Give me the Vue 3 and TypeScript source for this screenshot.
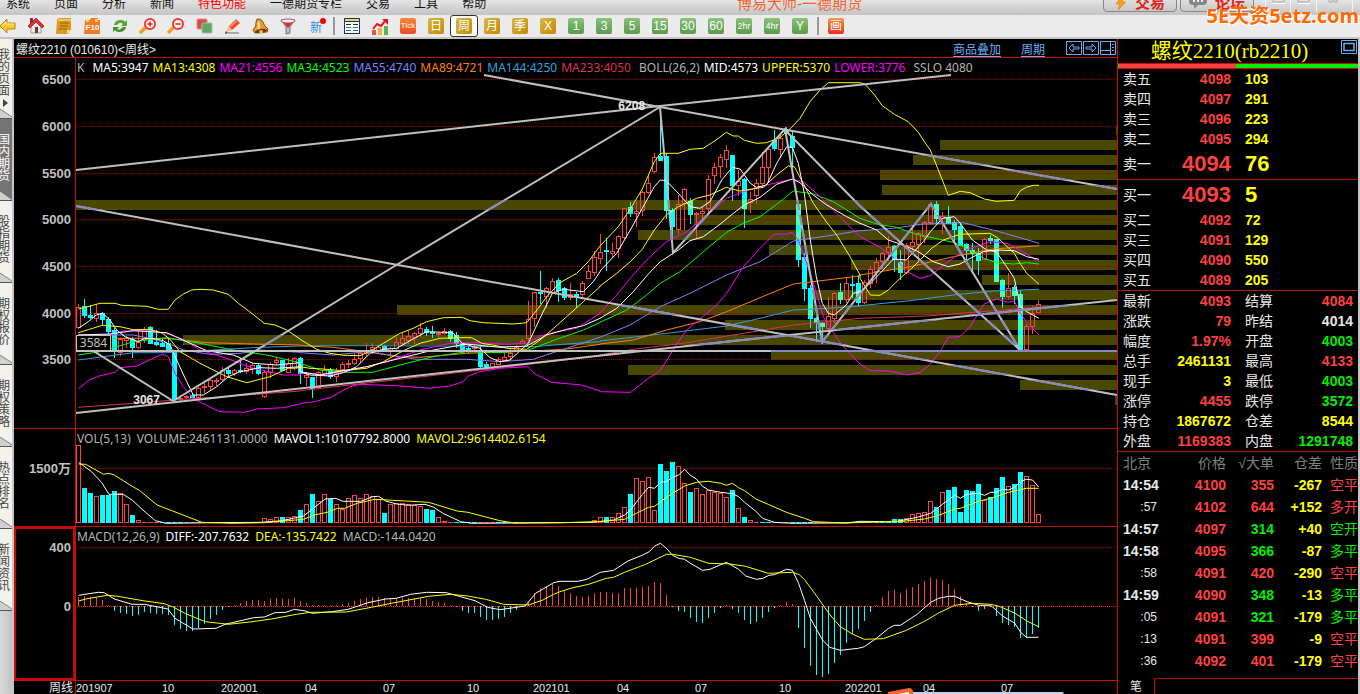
<script setup lang="ts">
type Kind = 'r' | 'c'
interface Candle { x: number; kind: Kind; high: number; top: number; bottom: number; low: number }
interface Bar { x: number; kind: Kind; y: number; h: number }
/* origin x, origin y, units per pixel in x, units per pixel in y, then the points */
type Segment = [number, number, number, number, string]

const step = 6
const firstX = 76

const menu = [
  { text: '系统' }, { text: '页面' }, { text: '分析' }, { text: '新闻' }, { text: '特色功能', hot: true },
  { text: '一德期货专栏' }, { text: '交易' }, { text: '工具' }, { text: '帮助' },
]
const tools = [
  { icon: 'back', label: '后退' }, { icon: 'home', label: '主页' }, { icon: 'note', label: '笔记' }, { icon: 'f10', label: 'F10' },
  { icon: 'refresh', label: '刷新' }, { icon: 'zoomin', label: '放大' }, { icon: 'zoomout', label: '缩小' }, { icon: 'layers', label: '叠加' },
  { icon: 'pencil', label: '画线' }, { icon: 'bell', label: '预警' }, { icon: 'funnel', label: '筛选' }, { icon: 'new', label: '新' },
]
const views = [{ icon: 'list', label: '报价' }, { icon: 'trend', label: '走势' }]
const periods = [
  { text: 'Tick', tone: 'tick' }, { text: '日', tone: 'gold' }, { text: '周', tone: 'gold', on: true }, { text: '月', tone: 'gold' },
  { text: '季', tone: 'gold' }, { text: 'X', tone: 'gold' }, { text: '1', tone: 'green' }, { text: '3', tone: 'green' },
  { text: '5', tone: 'green' }, { text: '15', tone: 'green' }, { text: '30', tone: 'green' }, { text: '60', tone: 'green' },
  { text: '2hr', tone: 'green small' }, { text: '4hr', tone: 'green small' }, { text: 'Y', tone: 'green' },
]
const sideTabs = ['我的页面', '国内期货', '股指期货', '期权报价', '期权策略', '热点排名', '新闻资讯']

const candleText = `
r304,307,327,327 c299,306,315,317 c305,315,317,318 r305,313,318,321 c312,313,319,324 c317,319,331,333 c328,330,351,357 r338,339,352,355
r336,338,340,347 c337,339,347,357 r330,342,347,348 r327,329,339,342 c326,327,343,343 c330,342,344,345 c338,343,346,346 c338,343,351,351
c350,351,399,401 r396,398,399,401 r395,396,397,398 c393,395,397,398 r387,388,397,399 r383,386,387,392 r378,380,386,389 r378,380,381,385
r367,370,379,380 c368,370,373,377 r369,370,373,375 c358,370,371,372 r363,368,371,373 r363,365,368,373 c363,365,373,374 r370,372,396,397
r362,364,372,377 r357,360,362,364 c360,360,370,370 r358,363,372,372 r357,358,368,369 c357,358,373,383 r372,375,377,385 c377,377,388,397
r371,372,387,388 r365,370,373,375 c368,370,376,378 r368,372,376,381 r362,364,369,372 r360,363,364,367 r353,359,363,364 r350,353,358,362
r343,351,353,355 r343,347,349,353 r345,347,350,353 c345,346,349,351 r347,348,350,356 r337,342,348,350 r333,338,343,345 r331,336,340,343
r332,333,337,343 r323,328,333,336 c327,329,332,335 c326,332,333,337 r332,333,334,336 r328,331,333,334 c330,331,338,341 c332,335,343,347
c343,343,351,352 c347,348,350,352 r345,347,348,350 c345,352,366,367 c362,364,368,368 r363,363,367,368 r357,359,364,364 r353,357,360,360
r349,353,356,359 r345,347,350,350 r339,341,343,343 r301,319,338,340 r292,292,318,326 c271,292,293,303 r287,288,296,307 r278,281,292,293
c278,280,290,301 c287,288,297,299 r283,294,297,299 c292,294,296,307 r281,283,294,297 r265,271,278,278 r251,257,272,275 r234,252,258,263
c238,250,251,270 r243,251,253,257 r235,236,248,257 r208,208,237,238 c202,207,213,216 r202,211,213,226 r191,192,210,215 r175,183,192,193
r153,157,171,172 c107,156,160,160 c153,156,210,218 c208,210,226,253 r195,204,229,233 r188,189,203,229 c198,201,214,223 r212,213,214,237
r207,211,213,220 r175,179,208,213 r163,167,175,183 r154,157,166,177 r145,150,159,167 c155,155,185,200 r170,181,185,195 c178,179,208,227
r192,199,202,212 r179,183,195,203 r152,167,183,187 r148,149,167,182 c130,140,148,150 r135,138,149,157 c127,131,133,133 c130,136,147,167
c203,204,259,266 c253,257,288,300 c285,288,318,327 c317,318,322,341 c322,323,326,343 r297,316,328,331 r292,293,318,322 c283,292,299,303
r278,283,299,302 c275,284,285,297 c275,283,302,305 r280,282,302,303 r266,269,283,287 r258,262,271,282 r252,253,261,268 r236,247,252,260
c245,246,259,271 c250,262,272,279 r243,245,272,273 r226,242,246,250 r232,233,244,262 r221,222,236,242 r203,204,222,224 c201,204,218,223
r212,216,218,233 c206,217,223,223 c220,222,229,241 c223,226,245,245 c243,244,250,260 c243,250,253,271 c248,253,260,274 r238,239,259,259
c235,238,240,243 c239,239,281,281 c279,280,296,307 r273,288,296,298 c285,287,295,303 c290,294,350,350 r324,326,349,349 r306,313,326,333
r300,304,312,312`

const candles: Candle[] = candleText.trim().split(/\s+/).map((item, i) => {
  const [high, top, bottom, low] = item.slice(1).split(',').map(Number)
  return { x: firstX + i * step, kind: item[0] as Kind, high, top, bottom, low }
})

/* volume: index of the first bar of a run, then the tops of the bars */
const volumeRuns: [number, string][] = [
  [0, 'r445 c488 c493 r496 c495 c495 c491 r493 r504 c515 r520 r522'],
  [31, 'r518 r519 r517 c517 r517 r516 c510 r504 c494 r501 r494 c499 r504 r509 r498 r495 r498 r494 r496 r499 c513 r504 r503 r503 r504 r505 r506 c509 c510 r517 r521'],
  [86, 'r520 r517 c517 r517 r513 r507 c494 r478 r481 r477 r510 c464 c471 c462 r466 r483 c492 r488 r494 r490 r492 r493 r497 c490 r508 c517 r520 r522'],
  [136, 'c519 c519 r518 r514 r513 r512 r501 c507 r492 c490 c487 c512 c490 c491 c484 r500 c497 c488 c477 r486 c484 c472 r476 r485 r514'],
]
const volumes: Bar[] = Array.from({ length: 161 }, (_, i) => ({
  x: firstX + i * step, kind: (i % 7 < 4 ? 'c' : 'r') as Kind, y: 522, h: 1,
}))
for (const [start, run] of volumeRuns) {
  run.split(' ').forEach((item, k) => {
    const y = Number(item.slice(1))
    volumes[start + k] = { x: firstX + (start + k) * step, kind: item[0] as Kind, y, h: 523 - y }
  })
}

const zero = 606
const histogram: Bar[] = `597 596 597 598 600 605 611 613 614 616 615 612 613 614 614 615 625 629 631 631 628 624 619 615 610 607 605 603 601 600 600 601
599 598 599 599 598 601 603 605 605 605 605 605 604 603 601 599 598 597 597 598 599 598 598 598 598 598 599 601 602 603 605 606 611 613 613 617 620 620
619 617 613 610 606 602 593 588 586 584 586 591 593 596 597 596 593 592 592 593 593 588 588 588 587 586 582 583 595 606 611 612 618 622 623 618 613 608
605 609 613 620 624 622 618 612 608 605 602 604 628 648 666 675 677 674 663 655 643 634 629 621 612 605 597 591 590 593 589 587 584 581 577 579 580 584
589 596 603 606 611 609 607 616 623 625 627 638 638 634 628`.split(/\s+/).map((item, i) => {
  const y = Number(item)
  return { x: 78 + i * step, kind: y < zero ? 'r' : 'c', y: Math.min(y, zero), h: Math.max(1, Math.abs(y - zero)) }
})

function linePoints(segments: Segment[]): string {
  return segments.map(([ox, oy, sx, sy, points]) => points.split(' ').map((p) => {
    const [x, y] = p.split(',').map(Number)
    return `${(ox + x / sx).toFixed(1)},${(oy + y / sy).toFixed(1)}`
  }).join(' ')).join(' ')
}
const priceLine = (a: string, b: string, c: string, d: string) =>
  linePoints([[0, 40, 3, 3, a], [300, 60, 3, 3, b], [600, 60, 3, 3, c], [860, 60, 3, 3, d]])
const lowerLine = (a: string, b: string) => linePoints([[0, 430, 2.8, 3, a], [560, 430, 2.8, 3, b]])

const priceLines = [
  { color: '#dc3250', points: priceLine('235,1102 400,1090 550,1078 700,1068 900,1053', '0,992 300,958 600,923 900,887', '0,885 100,868 250,850 400,825 580,795 780,775', '0,775 200,768 400,752 537,742') },
  { color: '#32a0dc', points: priceLine('235,960 400,938 500,938 640,930 780,922 900,918', '0,857 200,857 400,858 700,860 800,852 900,845', '0,843 200,820 380,798 480,775 580,750 680,745 780,738', '0,737 150,722 280,705 400,693 537,688') },
  { color: '#ff8000', points: priceLine('340,895 500,895 620,908 760,912 900,915', '0,857 100,862 200,875 300,890 360,892 500,880 700,873 800,867 900,853', '0,852 100,840 200,810 300,785 380,755 480,713 580,672 680,660 780,648', '0,645 150,620 280,590 400,567 537,557') },
  { color: '#8080ff', points: priceLine('235,885 400,885 450,895 510,912 550,930 630,943 720,940 780,930 900,937', '0,878 100,885 200,875 300,890 350,898 500,898 600,905 700,898 800,865 900,832', '0,832 90,795 181,740 270,700 380,645 480,605 580,543 680,528 780,512', '0,512 100,505 190,492 310,488 410,513 480,533 537,550') },
  { color: '#00ff00', points: priceLine('235,945 300,935 400,905 500,893 600,910 700,930 800,945 900,968', '0,910 60,930 130,937 220,937 300,915 400,890 500,875 600,878 680,872 770,838 850,810 900,788', '0,787 80,750 140,705 181,670 240,635 310,575 380,517 430,490 480,470 530,433 580,393 640,402 700,425 780,475', '0,475 60,495 103,500 170,523 280,547 310,560 373,595 409,608 460,612 500,608 537,612') },
  { color: '#ff00ff', points: priceLine('235,885 330,885 370,873 440,872 500,880 550,898 600,930 680,955 760,985 850,1005 900,1005', '0,938 90,945 180,925 260,905 360,870 450,850 530,848 620,853 680,850 720,828 770,815 830,805 900,760', '0,758 50,705 91,655 145,595 199,545 260,515 310,475 380,415 430,395 500,375 577,357 610,365 660,410 720,470 780,530', '0,530 60,562 103,595 150,640 180,655 211,647 260,608 310,573 390,545 440,550 480,570 537,605') },
  { color: '#ffff00', points: priceLine('235,878 265,869 307,856 360,860 400,869 450,868 487,880 510,898 540,935 600,970 680,1010 740,1028 810,1010 865,985 900,983', '0,920 30,925 70,927 125,932 200,925 250,905 310,872 360,850 420,835 480,833 515,833 545,850 590,857 620,865 680,868 720,840 755,810 800,770 850,725 900,680', '0,678 50,640 91,605 127,568 163,510 199,465 235,440 290,415 330,405 379,382 420,393 450,388 490,382 530,345 565,318 583,320 610,370 640,430 680,487 710,525 750,590 780,645', '0,655 31,705 60,706 85,690 120,655 155,625 180,600 215,565 250,540 300,523 390,520 415,535 463,580 480,610 500,640 537,673') },
  { color: '#ffffff', points: priceLine('235,885 330,882 400,872 500,878 560,905 620,932 700,945 760,970 830,975 900,968', '0,935 60,945 130,932 200,920 300,895 400,870 500,852 600,862 680,858 740,825 800,808 850,797 900,775', '0,775 50,745 100,695 145,642 181,605 235,570 270,542 310,530 360,493 400,460 433,435 480,412 530,373 577,357 600,368 640,405 680,435 740,470 780,490', '0,490 50,510 85,540 130,555 175,575 220,605 265,620 300,612 337,592 370,575 410,570 463,572 500,590 537,598') },
  { color: '#ffffff', points: priceLine('235,865 265,845 289,825 307,820 330,840 350,870 375,890 415,905 433,895 470,897 490,902 510,915 530,960 560,1025 580,1065 610,1065 650,1040 685,1010 720,995 780,983 830,985 900,980', '0,935 30,945 90,948 130,938 170,920 210,880 250,868 290,865 343,835 380,815 433,817 460,820 487,850 520,860 541,865 570,893 600,905 630,900 685,850 720,775 757,700 790,688 850,695 880,665 900,635', '0,633 50,580 91,510 127,445 163,380 181,360 199,362 235,400 271,440 300,445 330,425 365,360 397,322 420,327 451,370 469,382 500,375 530,310 560,260 577,262 595,310 613,400 631,540 649,650 667,730 685,760 703,765 739,735 760,700 780,695', '0,695 31,670 60,640 100,597 139,600 157,580 190,545 211,515 247,475 283,470 301,490 337,540 380,570 409,575 440,620 463,655 481,740 500,755 537,775') },
  { color: '#ffff00', points: priceLine('235,807 253,803 300,790 345,790 365,796 440,799 475,808 505,808 525,780 550,762 575,750 600,748 640,750 685,763 715,790 745,812 793,850 825,855 860,870 900,897', '0,838 50,868 90,880 130,886 180,887 217,870 250,850 300,820 340,805 380,785 430,773 487,772 510,782 550,788 640,792 680,788 715,745 740,710 780,668 830,640 865,605 900,558', '0,558 55,500 91,447 127,387 163,305 181,280 235,280 270,268 310,265 345,242 379,217 400,228 415,228 433,241 470,250 500,248 541,232 575,202 600,175 630,125 660,90 685,68 780,68', '0,68 15,73 40,100 67,137 103,163 145,185 175,217 195,248 211,270 229,315 247,360 265,406 301,394 330,398 373,417 409,424 463,421 481,392 499,382 520,376 537,376') },
  { color: '#ff00ff', points: priceLine('235,1047 265,1022 300,1007 345,997 360,983 410,978 455,957 487,942 505,950 525,1000 550,1040 580,1075 620,1097 660,1115 735,1117 770,1107 850,1103 900,1092', '0,1030 35,1027 90,1013 150,980 180,973 230,975 290,977 390,985 450,978 490,965 505,948 540,935 600,925 685,920 705,942 755,967 845,975 900,993', '0,995 92,997 145,955 181,932 225,860 260,810 290,785 350,735 380,700 430,620 480,565 523,523 560,522 577,517 595,540 620,610 650,700 670,770 721,850 780,912', '0,912 31,932 90,933 140,945 180,937 211,912 240,875 265,832 300,830 330,800 373,732 409,717 430,723 445,727 463,722 475,750 499,785 537,825') },
]

const drawings = [
  '76,170 660,106 951,75', '76,206 398,265 787,335 1117,395', '484,75 660,107 787,130 1117,189', '173,401 398,264 660,107',
  '76,340 173,401', '76,413 733,341 1117,300', '76,351 1117,351', '660,107 673,253 785,129 822,342 931,204 1020,350', '785,130 860,206 1020,350',
]

const profile = [
  [1116, 125], [940, 140], [913, 155], [880, 170], [882, 185], [76, 200], [694, 215], [638, 230], [769, 245], [851, 260],
  [982, 275], [812, 290], [397, 305], [725, 320], [183, 335], [771, 350], [628, 365], [1020, 380], [1115, 395],
]
const priceScale = [[6500, 79], [6000, 126], [5500, 173], [5000, 219], [4500, 266], [4000, 313], [3500, 359]]

const volumeLines = [
  { color: '#ffffff', points: lowerLine('220,97 255,124 285,158 305,193 345,193 370,210 400,240 435,272 465,280 600,278 730,277 790,272 850,258 875,237 910,207 940,205 960,214 1010,214 1043,200 1060,199 1080,213 1110,222 1145,226 1190,223 1215,232 1240,250 1290,275 1320,280 1568,278', '0,278 90,277 150,270 181,255 197,240 231,193 248,172 265,175 281,157 298,155 315,142 332,135 349,118 365,136 382,147 399,169 416,180 450,187 483,191 500,200 517,217 550,245 567,265 600,277 650,280 760,279 800,279 840,274 940,275 1000,262 1038,250 1071,223 1105,196 1121,205 1138,193 1172,190 1189,196 1206,187 1222,187 1239,178 1256,180 1273,172 1290,154 1306,148 1323,150 1340,171') },
  { color: '#ffff00', points: lowerLine('220,102 240,103 290,133 305,130 320,135 370,169 390,181 440,225 500,250 565,277 650,280 740,278 850,268 880,255 920,246 945,235 965,235 1000,220 1050,208 1100,211 1200,217 1280,243 1310,247 1400,272 1440,279 1568,278', '0,278 110,275 181,268 214,250 248,232 265,229 298,202 349,168 382,157 416,154 450,160 466,166 483,160 500,173 517,182 550,208 583,223 634,247 685,265 710,275 800,279 960,274 1021,267 1060,256 1105,237 1121,235 1172,214 1206,205 1256,187 1306,175 1340,175') },
]
const macdLines = [
  { color: '#ffffff', points: lowerLine('220,496 275,487 292,488 320,507 370,523 405,523 470,537 490,565 540,597 605,595 630,583 710,563 740,561 770,548 800,547 825,538 855,543 875,550 930,545 975,538 1030,518 1080,507 1110,505 1150,493 1195,487 1250,488 1290,500 1330,512 1365,532 1400,539 1470,528 1500,490 1550,458 1568,454', '0,454 50,454 75,448 113,427 150,421 190,393 230,376 250,365 265,348 281,340 300,357 315,376 332,385 349,388 365,400 399,421 420,418 466,397 500,418 520,438 550,448 568,445 585,436 600,434 634,418 651,421 668,460 685,512 701,565 735,630 755,652 785,661 835,655 852,650 886,625 920,595 936,586 953,586 1000,553 1038,517 1060,505 1088,499 1105,499 1140,515 1172,526 1206,526 1239,558 1273,579 1290,607 1306,622 1340,622') },
  { color: '#ffff00', points: lowerLine('220,513 240,507 300,496 330,499 400,512 460,521 485,531 520,551 575,575 640,583 700,576 760,567 830,553 870,547 970,546 1040,532 1100,519 1160,507 1200,499 1260,493 1310,498 1360,508 1410,523 1480,525 1520,510 1550,493 1568,485', '0,485 30,475 80,463 130,445 150,442 181,427 240,403 298,373 315,373 365,382 416,400 450,401 470,401 520,409 583,430 625,428 651,427 670,434 685,449 720,500 755,553 785,590 820,613 852,628 905,626 970,601 1021,574 1060,549 1105,526 1155,520 1206,523 1230,529 1273,549 1306,572 1340,590') },
]

const priceLegend = [
  { text: 'K', tone: 'gray', wide: true }, { text: 'MA5:3947', tone: 'white' }, { text: 'MA13:4308', tone: 'yellow' }, { text: 'MA21:4556', tone: 'magenta' },
  { text: 'MA34:4523', tone: 'lime' }, { text: 'MA55:4740', tone: 'violet' }, { text: 'MA89:4721', tone: 'orange' }, { text: 'MA144:4250', tone: 'sky' },
  { text: 'MA233:4050', tone: 'crimson', wide: true }, { text: 'BOLL(26,2)', tone: 'gray' }, { text: 'MID:4573', tone: 'white' }, { text: 'UPPER:5370', tone: 'yellow' },
  { text: 'LOWER:3776', tone: 'magenta', wide: true }, { text: 'SSLO 4080', tone: 'gray' },
]
const volumeLegend = [
  { text: 'VOL(5,13)', tone: 'gray' }, { text: 'VOLUME:2461131.0000', tone: 'gray' }, { text: 'MAVOL1:10107792.8000', tone: 'white' }, { text: 'MAVOL2:9614402.6154', tone: 'yellow' },
]
const macdLegend = [
  { text: 'MACD(12,26,9)', tone: 'gray' }, { text: 'DIFF:-207.7632', tone: 'white' }, { text: 'DEA:-135.7422', tone: 'yellow' }, { text: 'MACD:-144.0420', tone: 'gray' },
]
const months: [string, number][] = [
  ['201907', 86], ['10', 59], ['202001', 84], ['04', 78], ['07', 84], ['10', 66], ['202101', 84], ['04', 78], ['07', 84], ['10', 66], ['202201', 78], ['04', 78], ['07', 116],
]
const monthColumns = months.map(([, span]) => `minmax(0, ${span}fr)`).join(' ')

const asks = [['卖五', '4098', '103'], ['卖四', '4097', '291'], ['卖三', '4096', '223'], ['卖二', '4095', '294'], ['卖一', '4094', '76']]
const bids = [['买一', '4093', '5'], ['买二', '4092', '72'], ['买三', '4091', '129'], ['买四', '4090', '550'], ['买五', '4089', '205']]
const quotes = [
  ['最新', '4093', 'up', '结算', '4084', 'up'], ['涨跌', '79', 'up', '昨结', '4014', 'flat'], ['幅度', '1.97%', 'up', '开盘', '4003', 'down'],
  ['总手', '2461131', 'qty', '最高', '4133', 'up'], ['现手', '3', 'qty', '最低', '4003', 'down'], ['涨停', '4455', 'up', '跌停', '3572', 'down'],
  ['持仓', '1867672', 'qty', '仓差', '8544', 'qty'], ['外盘', '1169383', 'up', '内盘', '1291748', 'down'],
]
const trades = [
  ['14:54', '4100', '355', '-267', '空平', 'up'], [':57', '4102', '644', '+152', '多开', 'up'], ['14:57', '4097', '314', '+40', '空开', 'down'],
  ['14:58', '4095', '366', '-87', '多平', 'down'], [':58', '4091', '420', '-290', '空平', 'up'], ['14:59', '4090', '348', '-13', '多平', 'down'],
  [':05', '4091', '321', '-179', '多平', 'down'], [':13', '4091', '399', '-9', '空平', 'up'], [':36', '4092', '401', '-179', '空平', 'up'],
]
</script>

<template>
  <div class="app">
    <header class="menubar">
      <nav class="menu">
        <a v-for="m in menu" :key="m.text" href="#" :class="{ hot: m.hot }">{{ m.text }}</a>
      </nav>
      <h1>博易大师-一德期货</h1>
      <div class="actions">
        <button class="action" type="button">
          <svg width="12" height="14" viewBox="0 0 12 14"><path d="M7 0 1 8h4l-2 6 8-8H7l3-6z" fill="#ffa21a" stroke="#d87a00" stroke-width=".6" /></svg>交易
        </button>
        <button class="action" type="button">
          <svg width="18" height="14" viewBox="0 0 18 14"><path d="M4 1h10q4 0 4 4t-4 4H9l-4 4V9H4Q0 9 0 5t4-4z" fill="#858585" /><path d="M4 4h2v2H4zM8 4h2v2H8zM12 4h2v2h-2z" fill="#eee" /></svg>论坛
        </button>
        <svg class="winctl" width="88" height="15" viewBox="0 0 88 15">
          <path d="M.5 0v12M25.5 0v12M51.5 0v12M87.5 0v12" stroke="#f4f4f4" />
          <path d="M8 0v2h11V0M33 0v2h11V0M64 0v2h3V0M69 0v2h3V0" fill="none" stroke="#aaa" />
          <path d="M8 3.500h12M33 3.500h12" stroke="#fff" />
        </svg>
      </div>
      <span class="brand">5E天资5etz.com</span>
    </header>

    <div class="toolbar">
      <button v-for="t in tools" :key="t.icon" class="tool" type="button" :aria-label="t.label">
        <svg v-if="t.icon === 'back'" width="18" height="16" viewBox="0 0 18 16"><path d="M1 8 8 1v4h8v6H8v4z" fill="#f7c832" stroke="#b98508" /><path d="M3 8l4-4v2h8" fill="none" stroke="#fff09a" /></svg>
        <svg v-else-if="t.icon === 'home'" width="18" height="18" viewBox="0 0 18 18"><path d="M4 8v8h10V8l-5-5z" fill="#e8e8f0" stroke="#999" /><path d="M1 9 9 1l8 8-2 2-6-6-6 6z" fill="#e03434" stroke="#a01010" stroke-width=".7" /><path d="M3 1h3v4L3 7z" fill="#b02020" /><path d="M8 10h3v6H8z" fill="#713b20" /></svg>
        <svg v-else-if="t.icon === 'note'" width="16" height="16" viewBox="0 0 16 16"><path d="M1 2q0-2 3-2h11v12l-3 4H0z" fill="#d99a22" /><path d="M2 1h13v2H2z" fill="#f2c65d" /><path d="M4 5h9M4 8h8M3 11h8" stroke="#9b6708" /><path d="M11 16v-4h4z" fill="#ffe39b" /></svg>
        <svg v-else-if="t.icon === 'f10'" width="17" height="16" viewBox="0 0 17 16"><path d="M1 2h5l1-2h7v2h2v14H0z" fill="#f07a24" /><path d="M2 1h3v3H2zM11 1h3v3h-3z" fill="#ffd276" /><text x="8.500" y="12" text-anchor="middle" class="f10">F10</text></svg>
        <svg v-else-if="t.icon === 'refresh'" width="16" height="16" viewBox="0 0 16 16"><path d="M2 7q1-5 7-5 3 0 4 2l2-2v6H9l2-2Q8 3 5 7z" fill="#58a72c" /><path d="M14 9q-1 5-7 5-3 0-4-2l-2 2V9h6l-2 2q3 2 6-2z" fill="#3e8e2a" /></svg>
        <svg v-else-if="t.icon === 'zoomin' || t.icon === 'zoomout'" width="18" height="18" viewBox="0 0 18 18"><path d="m1 16 6-6" stroke="#f0a020" stroke-width="3.500" /><circle cx="11" cy="7" r="5" fill="#fff4f0" stroke="#ee3a30" stroke-width="2" /><path d="M8.500 7h5" stroke="#d22" stroke-width="1.500" /><path v-if="t.icon === 'zoomin'" d="M11 4.500v5" stroke="#d22" stroke-width="1.500" /></svg>
        <svg v-else-if="t.icon === 'layers'" width="17" height="16" viewBox="0 0 17 16"><rect x="1" y="1" width="10" height="10" rx="1" fill="#d94c4c" stroke="#f08080" /><rect x="6" y="5" width="10" height="10" rx="1" fill="#5da665" stroke="#94ca96" /></svg>
        <svg v-else-if="t.icon === 'pencil'" width="17" height="17" viewBox="0 0 17 17"><path d="M4 15h11" stroke="#aaa" stroke-width="2" /><path d="m3 13 2-5 7-7 4 4-8 7z" fill="#ee4a2c" /><path d="m6 8 6-6 1 1-6 6z" fill="#ff9b7c" /><path d="m2 14 3-6 3 4z" fill="#f5c48d" /><path d="m1 16 1-3 2 2z" fill="#333" /></svg>
        <svg v-else-if="t.icon === 'bell'" width="17" height="17" viewBox="0 0 17 17"><path d="M5 1q4-1 6 3 1 4 5 7l-1 3-12 1-2-3q4-4 3-8z" fill="#e89b26" stroke="#86500a" /><path d="M6 4q2 4 0 7" fill="none" stroke="#ffe198" stroke-width="2" /><ellipse cx="9" cy="13" rx="6" ry="2" transform="rotate(-8 9 13)" fill="#6d3606" /><circle cx="9" cy="14" r="2" fill="#efbd4c" /></svg>
        <svg v-else-if="t.icon === 'funnel'" width="16" height="17" viewBox="0 0 16 17"><path d="M1 2h14l-5 7v6l-4 1V9z" fill="#b4bbc4" stroke="#6d7880" /><ellipse cx="8" cy="3" rx="7" ry="2" fill="#e9eef2" stroke="#c94848" /><path d="m4 5 8 0-4 5z" fill="#e32626" /></svg>
        <span v-else class="new">新</span>
      </button>
      <i class="sep"></i>
      <button v-for="t in views" :key="t.icon" class="tool" type="button" :aria-label="t.label">
        <svg v-if="t.icon === 'list'" width="16" height="16" viewBox="0 0 16 16" shape-rendering="crispEdges"><path d="M0 0h16v16H0z" fill="#103c64" /><path d="M1 1h14v2H1z" fill="#f4d24b" /><path d="M1 4h14v11H1z" fill="#fff" /><path d="M2 6.500h5M9 6.500h5" stroke="#224" /><path d="M2 9.500h5M9 9.500h5" stroke="#189a33" /><path d="M2 12.500h5M9 12.500h5" stroke="#2563b5" /></svg>
        <svg v-else width="16" height="17" viewBox="0 0 16 17"><path d="M0 12h4v5H0z" fill="#e8534a" /><path d="M6 10h4v7H6z" fill="#f3b33a" /><path d="M12 8h4v9h-4z" fill="#62b157" /><path d="m1 11 4-5 4 2 5-6" fill="none" stroke="#e61919" stroke-width="2" /><path d="M10 1h6v6z" fill="#e61919" /></svg>
      </button>
      <button v-for="p in periods" :key="p.text" class="tool" :class="{ on: p.on }" type="button">
        <span class="badge" :class="p.tone">{{ p.text }}</span>
      </button>
      <i class="sep"></i>
      <button class="tool" type="button"><span class="badge red">画</span></button>
    </div>

    <main class="body">
      <nav class="side">
        <button v-for="(tab, i) in sideTabs" :key="tab" class="sidetab" :class="{ first: i === 0, on: i === 1 }" type="button">
          <span>{{ tab }}</span>
          <svg v-if="i === 0" class="arrow" width="5" height="8" viewBox="0 0 5 8"><path d="M0 0v8l5-4z" fill="#444" /></svg>
          <svg class="corner" width="12" height="9" viewBox="0 0 12 9"><path d="M0 0v9h12z" fill="#d0d0d0" /><path d="m0 0 12 8" stroke="#777" /></svg>
        </button>
      </nav>

      <section class="charts">
        <div class="caption">
          <span class="name">螺纹2210 (010610)&lt;周线&gt;</span>
          <a href="#">商品叠加</a>
          <a href="#" class="cycle">周期</a>
          <svg width="50" height="14" viewBox="0 0 50 14" fill="none" stroke="#6cacf4">
            <path d="M.5.5h15v13H.5zM17.500.5h15v13h-15zM34.500.5h15v13h-15z" />
            <path d="m3 7 4-4v3h6v2H7v3zM30 7l-4-4v3h-6v2h6v3z" />
            <path d="M34 9.500h10M44.500.5v13M46 3.500h2M46 6.500h2M46 9.500h2" />
          </svg>
        </div>

        <div class="pane">
          <svg class="scale" width="61" height="370" viewBox="14 58 61 370">
            <text v-for="[v, y] in priceScale" :key="v" x="71" :y="y + 5" text-anchor="end">{{ v }}</text>
          </svg>
          <div class="plot">
            <svg class="canvas kline" viewBox="76 58 1041 370" preserveAspectRatio="none">
              <defs>
                <clipPath id="profile-area"><rect v-for="[x, y] in profile" :key="y" :x="x" :y="y" :width="1117 - x" height="10" /></clipPath>
              </defs>
              <g class="profile"><rect v-for="[x, y] in profile" :key="y" :x="x" :y="y" :width="1117 - x" height="10" /></g>
              <path v-for="[v, y] in priceScale" :key="v" class="dots" :d="`M77 ${y + 0.5}H1117`" />
              <g class="bars">
                <template v-for="c in candles" :key="c.x">
                  <template v-if="c.kind === 'c'">
                    <rect class="fall" :x="c.x + 2" :y="c.high" width="1" :height="c.low - c.high + 1" />
                    <rect class="fall" :x="c.x" :y="c.top" width="5" :height="c.bottom - c.top + 1" />
                  </template>
                  <template v-else>
                    <path class="rise" :d="`M${c.x + 2.5} ${c.high}V${c.top}M${c.x + 2.5} ${c.bottom}V${c.low + 1}`" />
                    <rect class="rise" :x="c.x + 0.5" :y="c.top + 0.5" width="4" :height="c.bottom - c.top" />
                  </template>
                </template>
              </g>
              <g class="bars tinted" clip-path="url(#profile-area)">
                <template v-for="c in candles" :key="c.x">
                  <rect v-if="c.kind === 'c'" :x="c.x" :y="c.top" width="5" :height="c.bottom - c.top + 1" />
                </template>
              </g>
              <polyline v-for="(l, i) in priceLines" :key="i" class="curve" :points="l.points" :stroke="l.color" />
              <polyline v-for="d in drawings" :key="d" class="drawn" :points="d" />
              <g clip-path="url(#profile-area)"><polyline v-for="d in drawings" :key="d" class="drawn over" :points="d" /></g>
            </svg>
            <div class="legend">
              <span v-for="l in priceLegend" :key="l.text" :class="[l.tone, { wide: l.wide }]">{{ l.text }}</span>
            </div>
            <span class="cursor">3584</span>
            <span class="mark peak">6208</span>
            <span class="mark trough">3067</span>
          </div>
        </div>

        <div class="pane">
          <svg class="scale" width="61" height="97" viewBox="14 429 61 97"><text x="71" y="473" text-anchor="end">1500万</text></svg>
          <div class="plot">
            <svg class="canvas volume" viewBox="76 429 1041 97" preserveAspectRatio="none">
              <path class="dots" d="M77 468.500H1117" />
              <g class="bars">
                <template v-for="b in volumes" :key="b.x">
                  <rect v-if="b.kind === 'c' || b.h < 2" :class="b.kind === 'c' ? 'fall' : 'flatrise'" :x="b.x" :y="b.y" width="5" :height="b.h" />
                  <rect v-else class="rise" :x="b.x + 0.5" :y="b.y + 0.5" width="4" :height="b.h - 1" />
                </template>
              </g>
              <polyline v-for="l in volumeLines" :key="l.color" class="curve" :points="l.points" :stroke="l.color" />
            </svg>
            <div class="legend loose"><span v-for="l in volumeLegend" :key="l.text" :class="l.tone">{{ l.text }}</span></div>
          </div>
        </div>

        <div class="pane selected">
          <svg class="scale" width="61" height="153" viewBox="14 527 61 153">
            <text x="71" y="552" text-anchor="end">400</text><text x="71" y="611" text-anchor="end">0</text>
          </svg>
          <div class="plot">
            <svg class="canvas macd" viewBox="76 527 1041 153" preserveAspectRatio="none">
              <path class="dots" d="M77 547.500H1117" /><path class="dots zero" d="M77 606.500H1117" />
              <g class="bars"><rect v-for="b in histogram" :key="b.x" :class="b.kind === 'c' ? 'fall' : 'flatrise'" :x="b.x" :y="b.y" width="1" :height="b.h" /></g>
              <polyline v-for="l in macdLines" :key="l.color" class="curve" :points="l.points" :stroke="l.color" />
            </svg>
            <div class="legend loose"><span v-for="l in macdLegend" :key="l.text" :class="l.tone">{{ l.text }}</span></div>
          </div>
        </div>

        <div class="timeline">
          <span class="unit">周线</span>
          <div class="months" :style="{ gridTemplateColumns: monthColumns }"><span v-for="([m], i) in months" :key="i">{{ m }}</span></div>
        </div>
        <svg class="popup" width="176" height="6" viewBox="0 0 176 6"><path d="M24 4h151l1 2H24z" fill="#bcd0f0" /><path d="M0 6V4l21-4q3 0 4 3v3z" fill="#f7662b" /><path d="M10 6l11-2v2z" fill="#fff" /></svg>
      </section>

      <aside class="quote">
        <div class="contract">
          <h2>螺纹2210(rb2210)</h2>
          <svg width="16" height="14" viewBox="0 0 16 14" fill="none" stroke="#6cacf4"><path d="M.5.5h15v13H.5z" /><path d="M3 3.500h10v7H3z" stroke-width="1.500" /></svg>
        </div>
        <div class="balance"><i></i></div>
        <table class="book">
          <tbody>
            <tr v-for="(a, i) in asks" :key="a[0]" :class="{ best: i === 4 }"><th scope="row">{{ a[0] }}</th><td class="up price">{{ a[1] }}</td><td class="qty size">{{ a[2] }}</td></tr>
          </tbody>
        </table>
        <table class="book ruled">
          <tbody>
            <tr v-for="(b, i) in bids" :key="b[0]" :class="{ best: i === 0 }"><th scope="row">{{ b[0] }}</th><td class="up price">{{ b[1] }}</td><td class="qty size">{{ b[2] }}</td></tr>
          </tbody>
        </table>
        <table class="stats ruled">
          <tbody>
            <tr v-for="q in quotes" :key="q[0]">
              <th scope="row">{{ q[0] }}</th><td :class="q[2]">{{ q[1] }}</td><th scope="row" class="second">{{ q[3] }}</th><td class="last" :class="q[5]">{{ q[4] }}</td>
            </tr>
          </tbody>
        </table>
        <table class="ticks ruled">
          <thead><tr><th class="time">北京</th><th>价格</th><th>√大单</th><th>仓差</th><th class="nature">性质</th></tr></thead>
          <tbody>
            <tr v-for="(t, i) in trades" :key="i">
              <td class="time" :class="{ sec: t[0].length < 4 }">{{ t[0] }}</td><td class="up">{{ t[1] }}</td><td :class="t[5]">{{ t[2] }}</td><td class="qty">{{ t[3] }}</td><td class="nature" :class="t[5]">{{ t[4] }}</td>
            </tr>
          </tbody>
        </table>
        <div class="tabs"><button type="button">笔</button><i></i></div>
      </aside>
    </main>
  </div>
</template>

<style>
body {
  margin: 0;
  background: #000;
}
</style>

<style scoped>
.app {
  height: 100vh;
  display: flex;
  flex-direction: column;
  overflow: hidden;
  font-family: "Liberation Sans", "Noto Sans CJK SC", sans-serif;
  font-size: 12px;
  color: #e8e8e8;
}
button {
  font-family: inherit;
  font-size: 12px;
  padding: 0;
  border: 0;
  background: none;
}
svg { display: block; flex: none; }
i { font-style: normal; }

.menubar {
  position: relative;
  flex: none;
  height: 15px;
  display: flex;
  line-height: 8px;
  background: linear-gradient(#e4e4e4, #c4c4c4);
  white-space: nowrap;
}
.menu { display: flex; gap: 24px; padding-left: 6px; }
.menu a { color: #111; text-decoration: none; }
.menu .hot { color: #f00; }
h1 {
  margin: 0 auto;
  padding-left: 10px;
  font-size: 15px;
  line-height: 8px;
  font-weight: 400;
  color: #f06432;
}
.actions { display: flex; align-items: flex-start; gap: 3px; padding-right: 7px; }
.action {
  display: flex;
  align-items: center;
  justify-content: center;
  gap: 8px;
  width: 74px;
  height: 18px;
  margin-top: -6px;
  border: 1px solid #888;
  border-radius: 4px;
  background: linear-gradient(#e8e8e8, #c8c8c8);
  color: #d22;
  font-size: 15px;
  font-weight: 700;
  line-height: 14px;
}
.winctl { margin-left: 8px; }
.brand {
  position: absolute;
  z-index: 2;
  top: 4px;
  right: 1px;
  font: 700 20px/24px "Noto Sans", "Noto Sans CJK SC", sans-serif;
  color: #ff6a00;
  text-shadow: 1px 1px #fff, -1px 1px #fff;
}

.toolbar {
  flex: none;
  display: flex;
  align-items: center;
  height: 22px;
  background: #ebebeb;
  border-bottom: 2px solid #c8c4c0;
}
.tool {
  width: 28px;
  height: 22px;
  display: flex;
  flex: none;
  align-items: center;
  justify-content: center;
}
.tool:first-child { margin-left: -6px; }
.tool.on { border: 1px solid #333; border-radius: 3px; background: #fff; }
.sep { width: 2px; height: 18px; margin: 0 3px; background: #999; }
.f10 { font: 700 8px "Liberation Sans", sans-serif; fill: #fff; }
.new { position: relative; color: #2e8ee6; }
.new::after {
  content: "";
  position: absolute;
  top: 0;
  right: -4px;
  width: 6px;
  height: 6px;
  border-radius: 50%;
  background: #f00;
}
.badge {
  width: 16px;
  height: 16px;
  border-radius: 2px;
  color: #fff;
  text-align: center;
  font-size: 12px;
  line-height: 16px;
}
.gold { background: linear-gradient(135deg, #d9b64a, #c28a00); }
.green { background: linear-gradient(#8cc27a, #5a9a4c); }
.tick { background: linear-gradient(#f58a3c, #ee4a22); font-size: 8px; }
.red { background: linear-gradient(#f59a4c, #ee2a1a); }
.small { font-size: 9px; }

.body { flex: 1; min-height: 0; display: flex; background: #000; }
.side {
  flex: none;
  width: 12px;
  overflow: hidden;
  border-right: 2px solid #c8c4c8;
  background: linear-gradient(90deg, #d8d8d8, #c4c4c4);
}
.sidetab {
  position: relative;
  display: block;
  width: 12px;
  height: 82px;
  padding-top: 14px;
  border-bottom: 1px solid #555;
  background: #f2f2ea;
  color: #444;
  text-align: left;
  vertical-align: top;
}
.sidetab.first { height: 80px; padding-top: 6px; }
.sidetab.on { background: #747474; color: #fff; }
.sidetab span { display: block; width: 12px; height: 66px; margin-left: -2px; line-height: 12px; word-break: break-all; }
.arrow { position: absolute; left: 3px; top: 60px; }
.corner { position: absolute; left: 0; bottom: 0; }

.charts { position: relative; flex: 1; min-width: 0; overflow: hidden; }
.caption {
  display: flex;
  align-items: center;
  height: 18px;
  padding: 0 1px 0 2px;
  border-bottom: 1px solid #c01000;
  white-space: nowrap;
}
.name { flex: 1; }
.caption a { color: #6cacf4; text-underline-offset: 2px; }
.cycle { margin: 0 21px 0 20px; }
.pane { display: flex; border-bottom: 1px solid #c01000; }
.scale { fill: #c0c0c0; font: 700 13px "Liberation Sans", "Noto Sans CJK SC", sans-serif; }
.selected .scale { box-shadow: inset 0 0 0 2px #c01000; }
.plot { position: relative; flex: 1; min-width: 0; border-left: 1px solid #c01000; }
.canvas { width: 100%; }
.kline { height: 370px; }
.volume { height: 97px; }
.macd { height: 153px; }
.profile { fill: #4a4800; shape-rendering: crispEdges; }
.dots { stroke: #a00000; stroke-dasharray: 1 1; shape-rendering: crispEdges; }
.zero { stroke: #ff2020; }
.bars { shape-rendering: crispEdges; }
.fall { fill: #00ffff; }
.flatrise { fill: #ff4040; }
.rise { fill: none; stroke: #ff4040; }
.tinted { fill: #48ffb8; }
.curve { fill: none; stroke-width: 1; }
.drawn { fill: none; stroke: #c0c0c0; stroke-width: 2; }
.over { stroke: #8888c0; }
.legend {
  position: absolute;
  top: 2px;
  left: 1px;
  display: flex;
  gap: 4px;
  font: 12px/16px "Noto Sans", sans-serif;
  white-space: nowrap;
}
.loose { gap: 6px; }
.wide { margin-right: 4px; }
.gray { color: #b4b4b4; }
.white { color: #fff; }
.yellow { color: #ff0; }
.magenta { color: #f0f; }
.lime { color: #0f0; }
.violet { color: #8080ff; }
.orange { color: #ff8000; }
.sky { color: #32a0dc; }
.crimson { color: #dc3250; }
.cursor {
  position: absolute;
  left: 0;
  top: 277px;
  width: 33px;
  border: 1px solid #c0c0c0;
  background: #000;
  color: #c0c0c0;
  font: 12px/14px "Noto Sans", sans-serif;
  text-align: center;
}
.mark { position: absolute; color: #e8e8e8; font-size: 12px; font-weight: 700; line-height: 12px; }
.peak { left: 52.1%; top: 42px; }
.trough { left: 5.5%; top: 336px; }
.timeline { display: flex; line-height: 15px; height: 15px; }
.unit { width: 59px; padding-right: 2px; text-align: right; }
.months { flex: 1; display: grid; border-left: 1px solid #c01000; font-size: 11px; }
.months span { white-space: nowrap; }
.popup { position: absolute; left: 874px; bottom: 0; }

.quote {
  flex: none;
  width: 240px;
  overflow: hidden;
  border-left: 1px solid #c01000;
  border-right: 2px solid #c8c4c0;
  font-size: 14px;
}
.contract { display: flex; align-items: flex-start; height: 24px; padding-right: 1px; border-bottom: 1px solid #c01000; }
h2 {
  flex: 1;
  margin: 0;
  font: 400 21px/24px "Liberation Serif", "Noto Sans CJK SC", serif;
  text-align: center;
  color: #ff0;
}
.contract svg { margin-top: 1px; }
.balance { height: 4px; padding-left: 1px; border-bottom: 1px solid #c01000; background: #0e0; }
.balance i { display: block; width: 49%; height: 4px; background: #ff4040; }
table { width: 100%; border-collapse: separate; border-spacing: 0; table-layout: fixed; }
.ruled { border-top: 1px solid #c01000; }
th, td { padding: 0; height: 20px; line-height: 20px; text-align: right; font-weight: 700; white-space: nowrap; }
th { font-weight: 400; }
.book th, .stats th { width: 28px; padding-left: 5px; text-align: left; }
.book .price { width: 80px; }
.book .size { padding-left: 14px; text-align: left; }
.best th, .best td { height: 30px; line-height: 30px; }
.best td { font-size: 22px; }
.stats td { width: 80px; }
.stats .second { padding-left: 14px; }
.stats .last { width: 80px; padding-right: 5px; }
.up { color: #ff4040; }
.down { color: #0e0; }
.qty { color: #ff0; }
.flat { color: #e8e8e8; }
.ticks th, .ticks td { width: 48px; height: 22px; line-height: 22px; }
.ticks th { color: #808080; }
.ticks .time { width: 36px; padding-left: 5px; text-align: left; }
.ticks .time + th, .ticks .time + td { width: 67px; }
.ticks .sec { width: 39px; padding: 0 2px 0 0; text-align: right; font-size: 12px; font-weight: 400; }
.ticks .nature { width: 36px; font-weight: 400; }
.tabs { display: flex; margin-top: 6px; }
.tabs button { width: 36px; color: #e8e8e8; line-height: 16px; }
.tabs i { flex: 1; height: 16px; border: solid #c01000; border-width: 1px 0 0 1px; border-radius: 3px 0 0 0; }
</style>
